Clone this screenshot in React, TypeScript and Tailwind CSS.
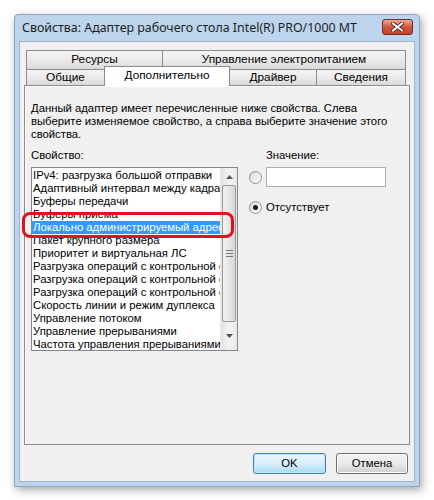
import React from "react";

const items = [
  "IPv4: разгрузка большой отправки",
  "Адаптивный интервал между кадрами",
  "Буферы передачи",
  "Буферы приема",
  "Локально администрируемый адрес",
  "Пакет крупного размера",
  "Приоритет и виртуальная ЛС",
  "Разгрузка операций с контрольной суммой",
  "Разгрузка операций с контрольной суммой",
  "Разгрузка операций с контрольной суммой",
  "Скорость линии и режим дуплекса",
  "Управление потоком",
  "Управление прерываниями",
  "Частота управления прерываниями",
];

const font = { fontFamily: '"Liberation Sans", Arial, sans-serif' };
const titleFont = { fontFamily: '"Noto Sans", "Open Sans", sans-serif' };

function Tab({ label, w, active }: { label: string; w: string; active?: boolean }) {
  return (
    <div
      className={`${w} flex items-center justify-center border border-[#898c95] -ml-px first:ml-0 ${
        active
          ? "bg-white h-[20px] -mt-[3px] border-b-0 relative z-10 pb-[2px]"
          : "h-[17px] bg-gradient-to-b from-[#f3f3f3] via-[#ebebeb] to-[#d9d9d9]"
      }`}
    >
      {label}
    </div>
  );
}

function Radio({ checked }: { checked?: boolean }) {
  return (
    <div className="w-[13px] h-[13px] rounded-full border border-[#8e8f8f] bg-gradient-to-br from-[#d8d8d8] to-white flex items-center justify-center">
      {checked && <div className="w-[5px] h-[5px] rounded-full bg-[#1b1b1b]" />}
    </div>
  );
}

export default function App() {
  return (
    <div className="w-[434px] h-[500px] bg-white pt-[14px] pl-[14px] text-[11.3px] text-black" style={font}>
      <div className="w-[406px] h-[473px] flex flex-col bg-[#bcd4ec] border border-[#8ea6c0] rounded-t-[4px] px-[4px] pb-[4px] shadow-[2px_3px_8px_rgba(0,0,0,0.35)]">
        {/* title bar */}
        <div className="h-[26px] flex items-center justify-between pl-[3px] pr-[2px]">
          <span className="text-[12.4px] text-[#1e1e1e]" style={titleFont}>
            Свойства: Адаптер рабочего стола Intel(R) PRO/1000 MT
          </span>
          <div className="w-[31px] h-[16px] -mt-[3px] rounded-[3px] border border-[#6c2b2b] bg-gradient-to-b from-[#e9a99b] via-[#d0553e] to-[#c3442e] flex items-center justify-center">
            <svg width="13" height="10" viewBox="0 0 13 10">
              <path d="M2 1.5 L11 8.5 M11 1.5 L2 8.5" stroke="#4a1a14" strokeWidth="3.6" strokeLinecap="square" />
              <path d="M2 1.5 L11 8.5 M11 1.5 L2 8.5" stroke="#fff" strokeWidth="2" strokeLinecap="square" />
            </svg>
          </div>
        </div>

        {/* client */}
        <div className="flex-1 flex flex-col bg-[#f0f0f0] border border-[#9fb4cb] pt-[8px] px-[4px]">
          {/* tabs */}
          <div className="flex flex-col pl-[2px] pr-[3px] text-[11.8px]">
            <div className="flex">
              <Tab label="Ресурсы" w="w-[137px] !h-[20px]" />
              <Tab label="Управление электропитанием" w="w-[244px] !h-[20px]" />
            </div>
            <div className="flex -mt-px">
              <Tab label="Общие" w="w-[79px]" />
              <Tab label="Дополнительно" w="w-[126px]" active />
              <Tab label="Драйвер" w="w-[88px]" />
              <Tab label="Сведения" w="w-[90px]" />
            </div>
          </div>

          {/* panel */}
          <div className="h-[360px] -mt-px border border-[#898c95] bg-[#f0f0f0] shadow-[inset_1px_1px_0_#fff] px-[6px] pt-[16px]">
            <p className="leading-[13px] w-[362px]">
              Данный адаптер имеет перечисленные ниже свойства. Слева выберите изменяемое свойство, а справа выберите значение этого свойства.
            </p>

            <div className="flex mt-[8px]">
              {/* property list */}
              <div className="flex flex-col">
                <div className="leading-[13px]">Свойство:</div>
                <div className="relative mt-[5px] w-[207px] h-[184px] border border-[#828790] bg-white flex">
                  <div className="flex-1 overflow-hidden pt-px">
                    {items.map((t, i) => (
                      <div
                        key={i}
                        className={`h-[13px] leading-[13px] whitespace-nowrap overflow-hidden pl-[1px] ${
                          i === 4 ? "bg-[#3399ff] text-white" : ""
                        }`}
                      >
                        {t}
                      </div>
                    ))}
                  </div>
                  {/* scrollbar */}
                  <div className="w-[17px] flex flex-col bg-gradient-to-r from-[#e3e3e3] via-[#f3f3f3] to-[#e8e8e8] border-l border-[#eaeaea]">
                    <div className="h-[17px] flex items-center justify-center">
                      <svg width="7" height="4" viewBox="0 0 7 4"><path d="M3.5 0 L7 4 L0 4 Z" fill="#555" /></svg>
                    </div>
                    <div className="mx-[1px] h-[137px] rounded-[2px] border border-[#9a9a9a] bg-gradient-to-r from-[#f2f2f2] via-[#e6e6e6] to-[#d6d6d6] flex items-center justify-center">
                      <div className="flex flex-col gap-[2px]">
                        <div className="w-[7px] h-px bg-[#7a7a7a]" />
                        <div className="w-[7px] h-px bg-[#7a7a7a]" />
                        <div className="w-[7px] h-px bg-[#7a7a7a]" />
                      </div>
                    </div>
                    <div className="flex-1 flex items-center justify-center">
                      <svg width="7" height="4" viewBox="0 0 7 4"><path d="M0 0 L7 0 L3.5 4 Z" fill="#555" /></svg>
                    </div>
                  </div>
                  {/* red annotation */}
                  <div className="absolute left-[-10px] top-[44px] w-[212px] h-[26px] rounded-[8px] border-[3px] border-[#e5101e]" />
                </div>
              </div>

              {/* value */}
              <div className="flex flex-col ml-[11px]">
                <div className="leading-[13px] pl-[17px]">Значение:</div>
                <div className="flex items-center mt-[5px]">
                  <Radio />
                  <div className="ml-[4px] w-[120px] h-[20px] border border-[#abadb3] bg-white" />
                </div>
                <div className="flex items-center mt-[12px]">
                  <Radio checked />
                  <span className="ml-[4px]">Отсутствует</span>
                </div>
              </div>
            </div>
          </div>

          {/* buttons */}
          <div className="flex justify-end gap-[10px] mt-[8px] pr-[2px]">
            <button className="w-[73px] h-[21px] rounded-[3px] border border-[#3c7fb1] bg-gradient-to-b from-[#eaf6fd] via-[#d9f0fc] to-[#a7d9f5] shadow-[inset_0_0_0_1px_#bfe7fd]">
              OK
            </button>
            <button className="w-[72px] h-[21px] rounded-[3px] border border-[#707070] bg-gradient-to-b from-[#f2f2f2] via-[#ebebeb] to-[#cfcfcf] shadow-[inset_0_0_0_1px_#fcfcfc]">
              Отмена
            </button>
          </div>
        </div>
      </div>
    </div>
  );
}
